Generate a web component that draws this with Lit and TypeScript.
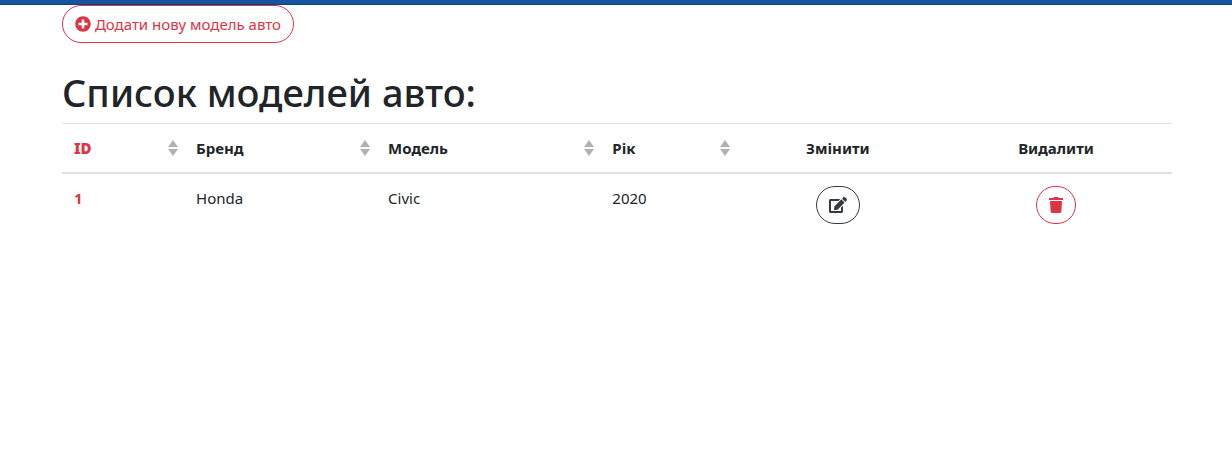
import { LitElement, html, css, svg } from "lit";
import { customElement, state } from "lit/decorators.js";

type SortKey = "id" | "brand" | "model" | "year";

interface CarModel {
  id: number;
  brand: string;
  model: string;
  year: number;
}

const plusCircle = svg`<path d="M256 8C119 8 8 119 8 256s111 248 248 248 248-111 248-248S393 8 256 8zm144 276c0 6.600-5.400 12-12 12h-92v92c0 6.600-5.400 12-12 12h-56c-6.600 0-12-5.400-12-12v-92h-92c-6.600 0-12-5.400-12-12v-56c0-6.600 5.400-12 12-12h92v-92c0-6.600 5.400-12 12-12h56c6.600 0 12 5.400 12 12v92h92c6.600 0 12 5.400 12 12v56z"/>`;
const edit = svg`<path d="M402.600 83.200l90.200 90.200c3.800 3.800 3.800 10 0 13.800L274.400 405.600l-92.800 10.300c-12.400 1.400-22.900-9.100-21.500-21.500l10.300-92.800L388.800 83.200c3.800-3.800 10-3.800 13.800 0zm162-22.900l-48.800-48.800c-15.200-15.200-39.900-15.200-55.200 0l-35.400 35.400c-3.800 3.800-3.800 10 0 13.800l90.200 90.200c3.800 3.800 10 3.800 13.800 0l35.400-35.400c15.200-15.300 15.200-40 0-55.200zM384 346.200V448H64V128h229.800c3.200 0 6.200-1.300 8.500-3.500l40-40c7.600-7.600 2.200-20.500-8.500-20.500H48C21.500 64 0 85.500 0 112v352c0 26.500 21.500 48 48 48h352c26.500 0 48-21.500 48-48V306.200c0-10.700-12.900-16-20.500-8.500l-40 40c-2.200 2.300-3.500 5.300-3.500 8.500z"/>`;
const trash = svg`<path d="M432 32H312l-9.400-18.700A24 24 0 0 0 281.100 0H166.800a23.720 23.720 0 0 0-21.400 13.300L136 32H16A16 16 0 0 0 0 48v32a16 16 0 0 0 16 16h416a16 16 0 0 0 16-16V48a16 16 0 0 0-16-16zM53.200 467a48 48 0 0 0 47.900 45h245.800a48 48 0 0 0 47.900-45L416 128H32z"/>`;

@customElement("app-root")
export class AppRoot extends LitElement {
  @state() private rows: CarModel[] = [
    { id: 1, brand: "Honda", model: "Civic", year: 2020 },
  ];

  static styles = css`
    :host {
      display: block;
      font-family: "Noto Sans", "Open Sans", sans-serif;
      font-size: 16px;
      line-height: 24px;
      color: #212529;
    }
    .bar {
      height: 4px;
      background: #15559f;
      border-bottom: 1px solid #0d4074;
    }
    .container {
      padding: 0 60px 0 62px;
    }
    .btn {
      display: inline-block;
      box-sizing: border-box;
      vertical-align: top;
      padding: 6px 12px;
      border: 1px solid currentColor;
      border-radius: 20px;
      background: transparent;
      font: inherit;
      cursor: pointer;
      white-space: nowrap;
    }
    .danger {
      color: #dc3545;
    }
    .dark {
      color: #343a40;
    }
    .add {
      font-size: 15px;
    }
    .icon {
      height: 16px;
      fill: currentColor;
      vertical-align: -2px;
    }
    .title {
      margin: 25px 0 7px;
      font-size: 38px;
      line-height: 48px;
      font-weight: 500;
    }
    .table {
      width: 100%;
      table-layout: fixed;
      border-collapse: separate;
      border-spacing: 0;
      text-align: left;
      font-size: 15px;
    }
    .table th,
    .table td {
      padding: 12px;
      vertical-align: top;
    }
    .table th {
      font-weight: 700;
    }
    .head th {
      border-top: 1px solid #dee2e6;
      border-bottom: 2px solid #dee2e6;
    }
    .head .sortable {
      padding-right: 5px;
    }
    .table .center {
      text-align: center;
    }
    .head .id {
      font-weight: 900;
    }
    .c-id { width: 11%; }
    .c-brand { width: 17.300%; }
    .c-model { width: 20.200%; }
    .c-year { width: 12.200%; }
    .c-edit { width: 18.400%; }
    .sort {
      display: flex;
      justify-content: space-between;
      align-items: center;
      width: 100%;
      padding: 0;
      border: 0;
      background: none;
      color: inherit;
      font: inherit;
      text-align: left;
      cursor: pointer;
    }
    .arrows {
      width: 12px;
      height: 16px;
      fill: #b2b2b2;
    }
  `;

  private sortBy(key: SortKey) {
    this.rows = [...this.rows].sort((a, b) => (a[key] > b[key] ? 1 : -1));
  }

  private remove(id: number) {
    this.rows = this.rows.filter((r) => r.id !== id);
  }

  private sortHead(label: string, key: SortKey) {
    return html`<th scope="col" class="sortable ${key === "id" ? "id danger" : ""}">
      <button class="sort" type="button" @click=${() => this.sortBy(key)}>
        ${label}
        <svg class="arrows" viewBox="0 0 12 16" aria-hidden="true">
          <path d="M6 0L11 7H1zM1 9h10L6 16z" />
        </svg>
      </button>
    </th>`;
  }

  render() {
    return html`
      <div class="bar"></div>
      <main class="container">
        <button class="btn danger add" type="button">
          <svg class="icon" viewBox="0 0 512 512" aria-hidden="true">${plusCircle}</svg>
          Додати нову модель авто
        </button>
        <h1 class="title">Список моделей авто:</h1>
        <table class="table">
          <colgroup>
            <col class="c-id" /><col class="c-brand" /><col class="c-model" />
            <col class="c-year" /><col class="c-edit" /><col />
          </colgroup>
          <thead class="head">
            <tr>
              ${this.sortHead("ID", "id")}
              ${this.sortHead("Бренд", "brand")}
              ${this.sortHead("Модель", "model")}
              ${this.sortHead("Рік", "year")}
              <th scope="col" class="center">Змінити</th>
              <th scope="col" class="center">Видалити</th>
            </tr>
          </thead>
          <tbody>
            ${this.rows.map(
              (r) => html`<tr>
                <th scope="row" class="danger">${r.id}</th>
                <td>${r.brand}</td>
                <td>${r.model}</td>
                <td>${r.year}</td>
                <td class="center">
                  <button class="btn dark" type="button" aria-label="Змінити">
                    <svg class="icon" viewBox="0 0 576 512" aria-hidden="true">${edit}</svg>
                  </button>
                </td>
                <td class="center">
                  <button class="btn danger" type="button" aria-label="Видалити" @click=${() => this.remove(r.id)}>
                    <svg class="icon" viewBox="0 0 448 512" aria-hidden="true">${trash}</svg>
                  </button>
                </td>
              </tr>`
            )}
          </tbody>
        </table>
      </main>
    `;
  }
}
